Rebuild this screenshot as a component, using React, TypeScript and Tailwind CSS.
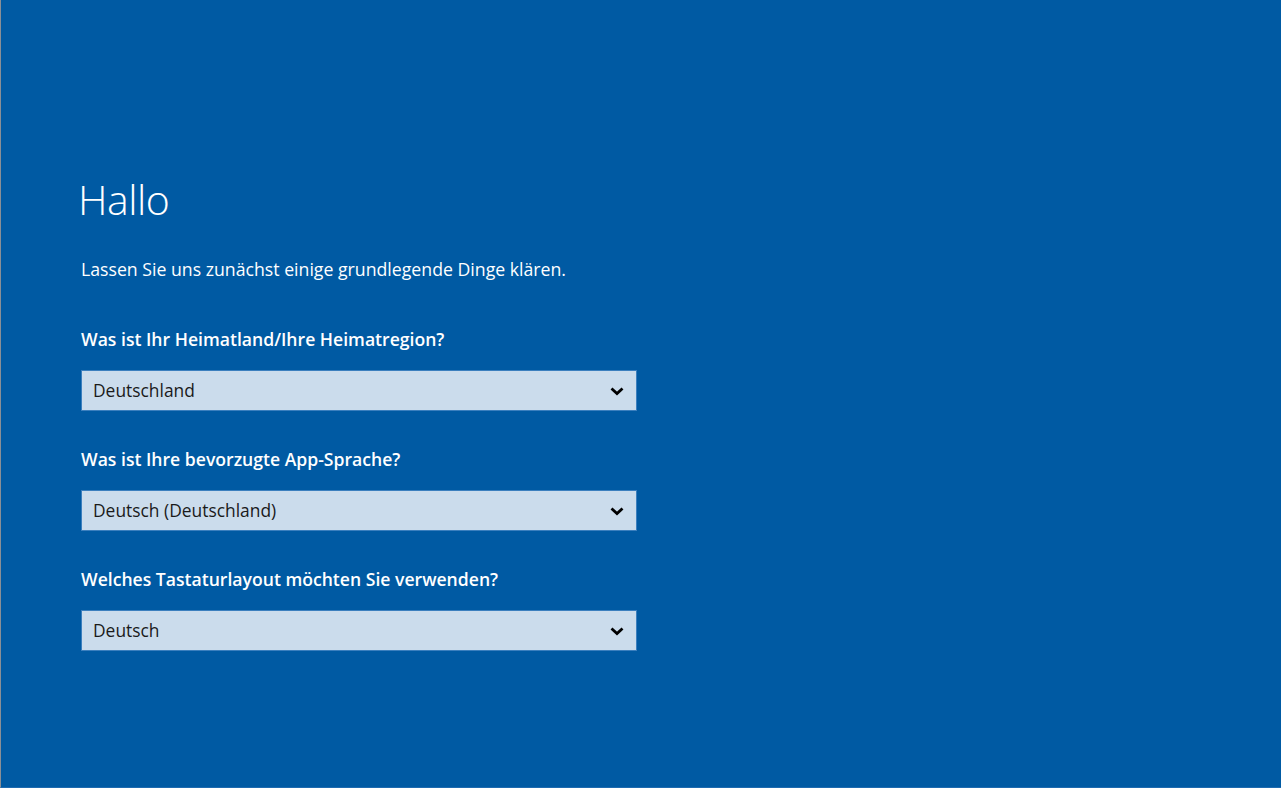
import React from 'react';

const fields = [
  { label: 'Was ist Ihr Heimatland/Ihre Heimatregion?', value: 'Deutschland' },
  { label: 'Was ist Ihre bevorzugte App-Sprache?', value: 'Deutsch (Deutschland)' },
  { label: 'Welches Tastaturlayout möchten Sie verwenden?', value: 'Deutsch' },
];

function Chevron() {
  return (
    <svg width="16" height="10" viewBox="0 0 16 10" className="text-black">
      <path d="M2.5 2.5 L8 7.5 L13.5 2.5" fill="none" stroke="currentColor" strokeWidth="2.8" />
    </svg>
  );
}

export default function App() {
  return (
    <div
      className="w-[1281px] h-[788px] bg-[#005aa3] border-l border-[#8a8f96] border-b border-b-[#1f6bb0] text-white overflow-hidden"
      style={{ fontFamily: '"Open Sans", "Noto Sans", sans-serif' }}
    >
      <div className="pl-[80px] pt-[169px]">
        <h1 className="text-[41px] font-light leading-[60px] tracking-[-0.5px] -ml-[3px]">Hallo</h1>
        <p className="mt-[29px] text-[17.7px] leading-[22px]">
          Lassen Sie uns zunächst einige grundlegende Dinge klären.
        </p>
        <div className="mt-[47px] flex flex-col gap-[36px]">
          {fields.map((f) => (
            <div key={f.label} className="flex flex-col">
              <div className="text-[17.6px] font-semibold leading-[24px]">{f.label}</div>
              <div className="mt-[19px] w-[556px] h-[41px] bg-[#cbdcec] border border-[#3b7fbe] flex items-center justify-between pl-[11px] pr-[11px]">
                <span className="text-[17.4px] text-[#1a1a1a]">{f.value}</span>
                <Chevron />
              </div>
            </div>
          ))}
        </div>
      </div>
    </div>
  );
}
